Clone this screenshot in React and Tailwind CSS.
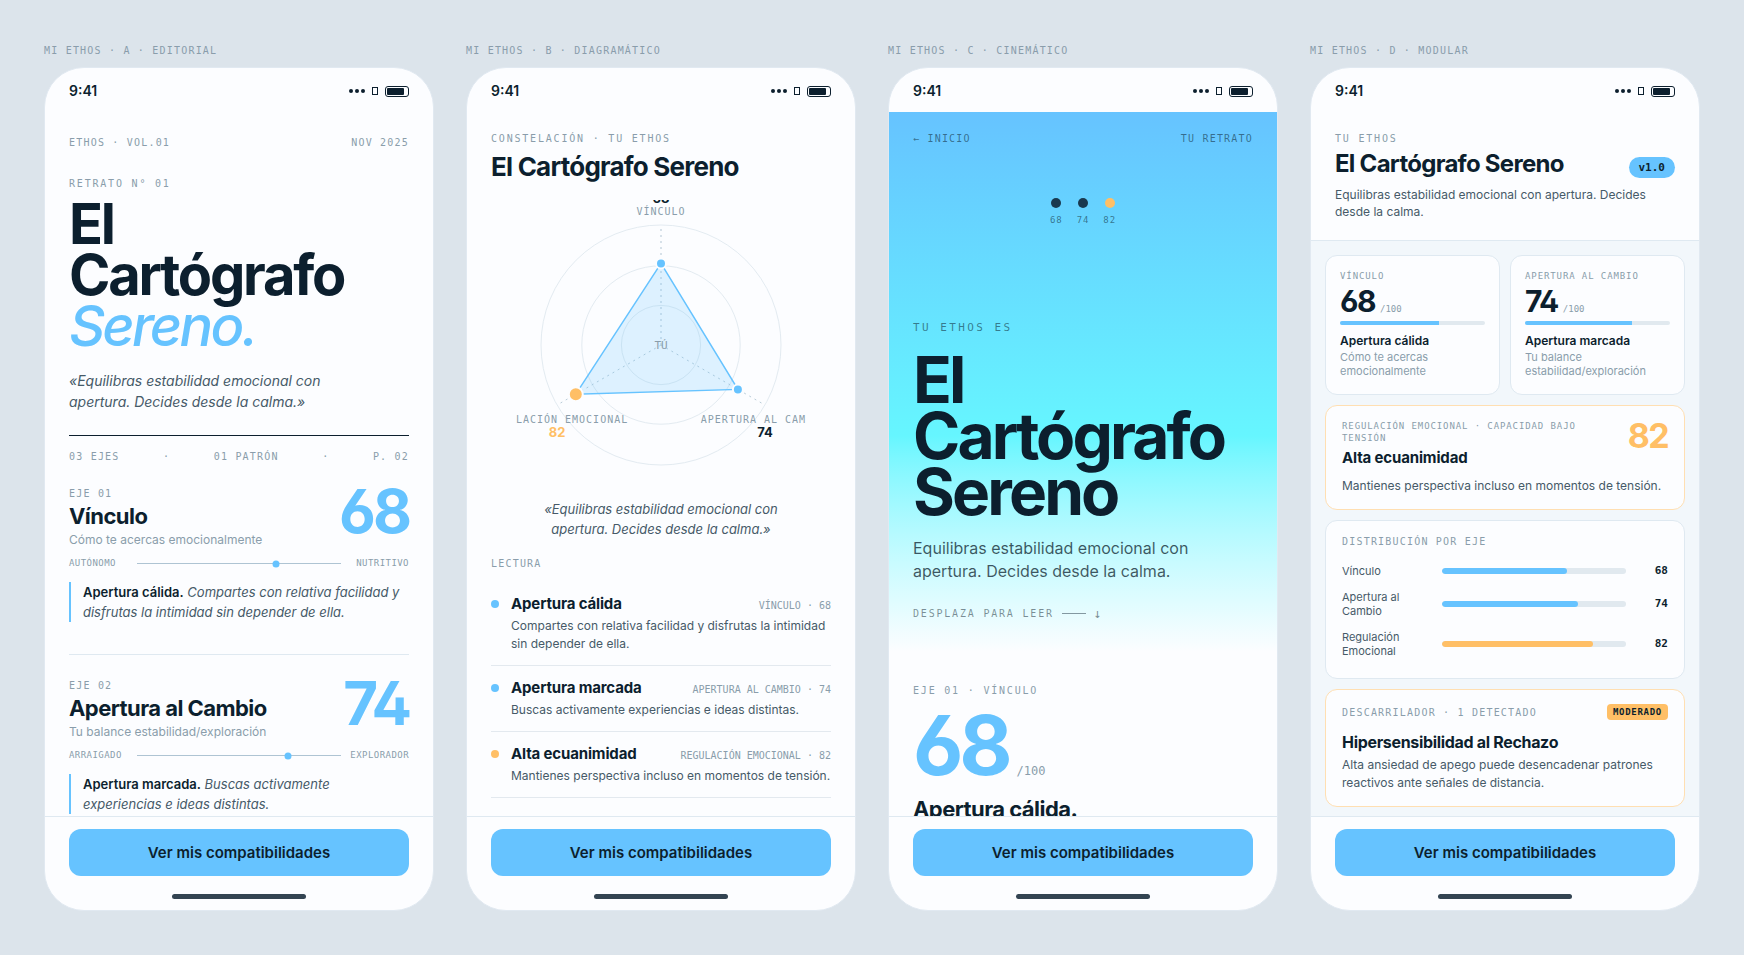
import React from "react";

const MONO = "font-['DejaVu_Sans_Mono','Liberation_Mono',monospace]";
const HEAD = "font-['Inter','Liberation_Sans',sans-serif] font-bold text-[#0c1f2e]";
const NUM = "font-['Inter','Liberation_Sans',sans-serif] font-bold tracking-[-0.05em] [font-feature-settings:'ss01']";
const LABEL = `${MONO} text-[10px] leading-[13px] uppercase text-[#8a9dab]`;

const AXES = [
  {
    n: "01",
    name: "Vínculo",
    sub: "Cómo te acercas emocionalmente",
    value: 68,
    low: "Autónomo",
    high: "Nutritivo",
    title: "Apertura cálida",
    text: "Compartes con relativa facilidad y disfrutas la intimidad sin depender de ella.",
  },
  {
    n: "02",
    name: "Apertura al Cambio",
    sub: "Tu balance estabilidad/exploración",
    value: 74,
    low: "Arraigado",
    high: "Explorador",
    title: "Apertura marcada",
    text: "Buscas activamente experiencias e ideas distintas.",
  },
  {
    n: "03",
    name: "Regulación Emocional",
    sub: "Capacidad bajo tensión",
    value: 82,
    low: "Reactivo",
    high: "Ecuánime",
    title: "Alta ecuanimidad",
    text: "Mantienes perspectiva incluso en momentos de tensión.",
    accent: true,
  },
];

function StatusBar() {
  return (
    <div className="flex h-11 shrink-0 items-center justify-between px-6 pt-[2px]">
      <span className="text-[14px] leading-[18px] font-semibold">9:41</span>
      <div className="flex items-center gap-[7px]" aria-hidden="true">
        <span className="flex gap-[2px]">
          <i className="size-[4px] rounded-full bg-[#0c1f2e]" />
          <i className="size-[4px] rounded-full bg-[#0c1f2e]" />
          <i className="size-[4px] rounded-full bg-[#0c1f2e]" />
        </span>
        <span className="h-[8px] w-[6px] border border-[#0c1f2e]" />
        <span className="h-[11px] w-6 rounded-[3px] border border-[#0c1f2e] p-px">
          <span className="block h-full w-[17px] rounded-[1px] bg-[#0c1f2e]" />
        </span>
      </div>
    </div>
  );
}

function Phone({ label, children }) {
  return (
    <section className="flex min-w-0 flex-col gap-[10px]">
      <h2 className={`${LABEL} tracking-[0.12em]`}>{label}</h2>
      <div className="flex aspect-[390/844] w-full flex-col overflow-hidden rounded-[40px] border border-[#e1e9f1] bg-[#fcfdff]">
        <StatusBar />
        <div className="min-h-0 flex-1 overflow-hidden">{children}</div>
        <footer className="shrink-0 border-t border-[#dfe9f1] px-6 pt-3">
          <button
            type="button"
            className="h-[47px] w-full rounded-xl bg-[#66c3ff] text-[15px] leading-5 font-semibold text-[#0c1f2e]"
          >
            Ver mis compatibilidades
          </button>
          <div className="mx-auto mt-[18px] mb-[11px] h-[5px] w-[134px] rounded-full bg-[#334452]" />
        </footer>
      </div>
    </section>
  );
}

function AxisSection({ axis }) {
  return (
    <article className="border-b border-[#dfe9f1] pt-6 pb-8">
      <div className="flex items-start justify-between">
        <div>
          <p className={`${LABEL} tracking-[0.12em]`}>Eje {axis.n}</p>
          <h3 className={`${HEAD} mt-1 text-[22px] leading-6 tracking-[-0.025em]`}>{axis.name}</h3>
          <p className="mt-1 text-[12px] leading-[15px] text-[#8a9dab]">{axis.sub}</p>
        </div>
        <span className={`${NUM} text-[60px] leading-[48px] text-[#66c3ff]`}>{axis.value}</span>
      </div>
      <div className={`${MONO} mt-[10px] flex items-center gap-2 text-[9px] leading-[13px] tracking-[0.05em] text-[#8a9dab] uppercase`}>
        <span className="w-[60px]">{axis.low}</span>
        <div className="relative h-px flex-1 bg-[#aec4d3]">
          <i
            className="absolute top-1/2 size-[7px] -translate-1/2 rounded-full bg-[#66c3ff]"
            style={{ left: `${axis.value}%` }}
          />
        </div>
        <span className="w-[60px] text-right">{axis.high}</span>
      </div>
      <p className="mt-3 border-l-2 border-[#66c3ff] pl-3 text-[13px] leading-5 text-[#465a68] italic">
        <strong className="font-semibold text-[#0c1f2e] not-italic">{axis.title}.</strong> {axis.text}
      </p>
    </article>
  );
}

function Editorial() {
  return (
    <div className="px-6 pt-6">
      <div className={`${LABEL} flex justify-between tracking-[0.12em]`}>
        <span>Ethos · Vol.01</span>
        <span>Nov 2025</span>
      </div>
      <p className={`${LABEL} mt-7 tracking-[0.18em]`}>Retrato N° 01</p>
      <h1 className={`${HEAD} mt-[9px] text-[56px] leading-[51px] tracking-[-0.04em]`}>
        El
        <br />
        Cartógrafo
        <br />
        <em className="font-medium tracking-[-0.05em] text-[#66c3ff]">Sereno.</em>
      </h1>
      <p className="mt-[18px] max-w-[280px] text-[14px] leading-[21px] text-[#465a68] italic">
        «Equilibras estabilidad emocional con apertura. Decides desde la calma.»
      </p>
      <div className={`${LABEL} mt-[23px] flex justify-between border-t border-[#0c1f2e] pt-[14px] tracking-[0.12em]`}>
        <span>03 Ejes</span>
        <span>·</span>
        <span>01 Patrón</span>
        <span>·</span>
        <span>P. 02</span>
      </div>
      {AXES.map((axis) => (
        <AxisSection key={axis.n} axis={axis} />
      ))}
    </div>
  );
}

function Constellation() {
  const svgLabel = "fill-[#8a9dab] font-['DejaVu_Sans_Mono','Liberation_Mono',monospace] text-[10px] tracking-[0.1em]";
  const svgValue = "font-['Inter','Liberation_Sans',sans-serif] text-[13px] font-bold";
  return (
    <svg viewBox="0 0 290 290" className="mx-auto mt-[19px] block w-[290px] overflow-hidden" role="img" aria-label="Constelación de ejes">
      <g fill="none" stroke="#e3ebf1">
        <circle cx="145" cy="145" r="39.6" />
        <circle cx="145" cy="145" r="79.2" />
        <circle cx="145" cy="145" r="120" />
      </g>
      <g stroke="#b9ccd8" strokeDasharray="2 4">
        <path d="M145 145V25" strokeWidth="1.5" strokeOpacity="0.75" />
        <path d="M145 145L248.9 205" />
        <path d="M145 145L41.1 205" />
      </g>
      <polygon points="145,63.4 221.9,189.4 59.8,194.2" fill="#66c3ff" fillOpacity="0.2" stroke="#66c3ff" strokeWidth="1.5" />
      <g stroke="#fcfdff" strokeWidth="2">
        <circle cx="145" cy="63.4" r="5" fill="#66c3ff" />
        <circle cx="221.9" cy="189.4" r="5" fill="#66c3ff" />
        <circle cx="59.8" cy="194.2" r="7" fill="#ffbf66" />
      </g>
      <g textAnchor="middle">
        <text x="145" y="149" className="fill-[#8a9dab] font-['DejaVu_Sans_Mono','Liberation_Mono',monospace] text-[11px]">TÚ</text>
        <text x="145" y="15" className={svgLabel}>VÍNCULO</text>
        <text x="145" y="3" className={`${svgValue} fill-[#0c1f2e]`}>68</text>
        <text x="248" y="223" className={svgLabel}>APERTURA AL CAMBIO</text>
        <text x="249" y="237" className={`${svgValue} fill-[#0c1f2e]`}>74</text>
        <text x="42" y="223" className={svgLabel}>REGULACIÓN EMOCIONAL</text>
        <text x="41" y="237" className={`${svgValue} fill-[#ffbf66]`}>82</text>
      </g>
    </svg>
  );
}

function Diagram() {
  return (
    <div className="px-6 pt-5">
      <p className={`${LABEL} tracking-[0.18em]`}>Constelación · Tu ethos</p>
      <h1 className={`${HEAD} mt-2 text-[26px] leading-7 tracking-[-0.03em]`}>El Cartógrafo Sereno</h1>
      <Constellation />
      <p className="mx-auto mt-[9px] max-w-[280px] text-center text-[13px] leading-5 text-[#465a68] italic">
        «Equilibras estabilidad emocional con apertura. Decides desde la calma.»
      </p>
      <p className={`${LABEL} mt-[18px] tracking-[0.12em]`}>Lectura</p>
      <ul className="mt-3">
        {AXES.map((axis) => (
          <li key={axis.n} className="flex gap-3 border-b border-[#e3e9ef] py-3">
            <i className={`mt-[6px] size-2 shrink-0 rounded-full ${axis.accent ? "bg-[#ffbf66]" : "bg-[#66c3ff]"}`} />
            <div className="min-w-0 flex-1">
              <div className="flex items-baseline justify-between">
                <h3 className={`${HEAD} text-[15px] leading-5 tracking-[-0.01em]`}>{axis.title}</h3>
                <span className={LABEL}>
                  {axis.name} · {axis.value}
                </span>
              </div>
              <p className="mt-[3px] text-[12px] leading-[18px] text-[#465a68]">{axis.text}</p>
            </div>
          </li>
        ))}
      </ul>
    </div>
  );
}

function Cinematic() {
  return (
    <div>
      <div className="bg-linear-to-b from-[#66c3ff] from-0% via-[#66f6ff] via-60% to-[#fcfdff] to-100% px-6 pt-5 pb-8">
        <div className={`${MONO} flex justify-between text-[10px] leading-[13px] tracking-[0.12em] text-[#0c1f2e]/55 uppercase`}>
          <a href="#inicio">← Inicio</a>
          <span>Tu retrato</span>
        </div>
        <div className="mt-[53px] flex justify-center gap-[14px]">
          {AXES.map((axis) => (
            <div key={axis.n} className="flex flex-col items-center gap-[6px]">
              <i className={`size-[10px] rounded-full ${axis.accent ? "bg-[#ffbf66]" : "bg-[#1a394f]"}`} />
              <span className={`${MONO} text-[9px] leading-3 tracking-[0.1em] text-[#0c1f2e]/55`}>{axis.value}</span>
            </div>
          ))}
        </div>
        <p className={`${MONO} mt-[94px] text-[11px] leading-[15px] tracking-[0.22em] text-[#0c1f2e]/55 uppercase`}>Tu ethos es</p>
        <h1 className={`${HEAD} mt-[17px] text-[64px] leading-[56px] tracking-[-0.045em]`}>
          El
          <br />
          Cartógrafo
          <br />
          Sereno
        </h1>
        <p className="mt-[17px] max-w-[300px] text-[16px] leading-[23px] text-[#0c1f2e]/75">
          Equilibras estabilidad emocional con apertura. Decides desde la calma.
        </p>
        <div className={`${MONO} mt-6 flex items-center gap-2 text-[10px] leading-[13px] tracking-[0.18em] text-[#0c1f2e]/50 uppercase`}>
          <span>Desplaza para leer</span>
          <span className="h-px w-6 bg-[#0c1f2e]/45" />
          <span className="text-[13px]">↓</span>
        </div>
      </div>
      <div className="px-6 pt-8">
        <p className={`${LABEL} tracking-[0.18em]`}>Eje 01 · Vínculo</p>
        <div className="mt-3 flex items-baseline gap-2">
          <span className={`${NUM} text-[82px] leading-[74px] text-[#66c3ff]`}>68</span>
          <span className={`${MONO} text-[12px] leading-4 text-[#8a9dab]`}>/100</span>
        </div>
        <h3 className={`${HEAD} mt-3 text-[22px] leading-7 tracking-[-0.025em]`}>Apertura cálida.</h3>
      </div>
    </div>
  );
}

function ScoreCard({ axis }) {
  return (
    <article className="rounded-xl border border-[#dfe9f1] bg-[#fcfdff] px-[14px] pt-[14px] pb-4">
      <p className={`${MONO} text-[9px] leading-3 tracking-[0.1em] text-[#8a9dab] uppercase`}>{axis.name}</p>
      <div className="mt-1 flex items-baseline gap-[5px]">
        <span className={`${NUM} text-[30px] leading-[30px] text-[#0c1f2e]`}>{axis.value}</span>
        <span className={`${MONO} text-[9px] leading-3 text-[#8a9dab]`}>/100</span>
      </div>
      <div className="mt-[5px] h-1 overflow-hidden rounded-full bg-[#e1e9ef]">
        <div className="h-full bg-[#66c3ff]" style={{ width: `${axis.value}%` }} />
      </div>
      <h3 className="mt-2 text-[12px] leading-[15px] font-semibold">{axis.title}</h3>
      <p className="mt-[2px] text-[11px] leading-[14px] text-[#8a9dab]">{axis.sub}</p>
    </article>
  );
}

function Modular() {
  return (
    <div className="flex h-full flex-col">
      <header className="border-b border-[#dfe9f1] px-6 pt-5 pb-5">
        <div className="flex items-end justify-between">
          <div>
            <p className={`${LABEL} tracking-[0.18em]`}>Tu ethos</p>
            <h1 className={`${HEAD} mt-1 text-[24px] leading-[29px] tracking-[-0.03em]`}>El Cartógrafo Sereno</h1>
          </div>
          <span className={`${MONO} rounded-full bg-[#66c3ff] px-[10px] py-[3px] text-[11px] leading-[15px] font-bold`}>v1.0</span>
        </div>
        <p className="mt-2 text-[12px] leading-[17px] text-[#465a68]">
          Equilibras estabilidad emocional con apertura. Decides desde la calma.
        </p>
      </header>
      <div className="flex min-h-0 flex-1 flex-col gap-[10px] bg-[#f2f7fb] p-[14px]">
        <div className="grid shrink-0 grid-cols-2 gap-[10px]">
          <ScoreCard axis={AXES[0]} />
          <ScoreCard axis={AXES[1]} />
        </div>

        <article className="shrink-0 rounded-xl border border-[#ffdfb2] bg-[#fcfdff] px-4 py-[14px]">
          <div className="flex items-start justify-between gap-4">
            <div>
              <p className={`${MONO} text-[9px] leading-3 tracking-[0.1em] text-[#8a9dab] uppercase`}>
                Regulación Emocional · Capacidad bajo tensión
              </p>
              <h3 className={`${HEAD} mt-1 text-[15px] leading-5 tracking-[-0.01em]`}>Alta ecuanimidad</h3>
            </div>
            <span className={`${NUM} text-[34px] leading-8 text-[#ffbf66]`}>82</span>
          </div>
          <p className="mt-[9px] text-[12px] leading-[18px] text-[#465a68]">{AXES[2].text}</p>
        </article>

        <article className="shrink-0 rounded-xl border border-[#dfe9f1] bg-[#fcfdff] px-4 pt-[14px] pb-5">
          <h3 className={`${LABEL} tracking-[0.12em]`}>Distribución por eje</h3>
          <div className="mt-4 flex flex-col gap-3">
            {AXES.map((axis) => (
              <div key={axis.n} className="grid grid-cols-[90px_1fr_32px] items-center gap-[10px]">
                <span className="text-[11px] leading-[14px] text-[#465a68]">
                  <span className="block max-w-[70px]">{axis.name}</span>
                </span>
                <div className="h-[6px] overflow-hidden rounded-full bg-[#e1e9ef]">
                  <div
                    className={`h-full rounded-full ${axis.accent ? "bg-[#ffbf66]" : "bg-[#66c3ff]"}`}
                    style={{ width: `${axis.value}%` }}
                  />
                </div>
                <span className={`${MONO} text-right text-[11px] leading-[14px] font-bold`}>{axis.value}</span>
              </div>
            ))}
          </div>
        </article>

        <article className="shrink-0 rounded-xl border border-[#ffdfb2] bg-[#fcfdff] px-4 py-[14px]">
          <div className="flex items-center justify-between">
            <p className={`${LABEL} tracking-[0.12em]`}>Descarrilador · 1 detectado</p>
            <span className={`${MONO} rounded-[4px] bg-[#ffbf66] px-[6px] py-[2px] text-[9px] leading-3 font-bold tracking-[0.08em] uppercase`}>
              Moderado
            </span>
          </div>
          <h3 className={`${HEAD} mt-3 text-[16px] leading-5 tracking-[-0.02em]`}>Hipersensibilidad al Rechazo</h3>
          <p className="mt-1 text-[12px] leading-[18px] text-[#465a68]">
            Alta ansiedad de apego puede desencadenar patrones reactivos ante señales de distancia.
          </p>
        </article>
      </div>
    </div>
  );
}

export default function App() {
  return (
    <main className="grid min-h-screen grid-cols-[repeat(auto-fit,minmax(360px,1fr))] content-start gap-8 bg-[#dce4eb] p-11 font-['Inter','Liberation_Sans',sans-serif] text-[#0c1f2e]">
      <Phone label="Mi Ethos · A · Editorial">
        <Editorial />
      </Phone>
      <Phone label="Mi Ethos · B · Diagramático">
        <Diagram />
      </Phone>
      <Phone label="Mi Ethos · C · Cinemático">
        <Cinematic />
      </Phone>
      <Phone label="Mi Ethos · D · Modular">
        <Modular />
      </Phone>
    </main>
  );
}
